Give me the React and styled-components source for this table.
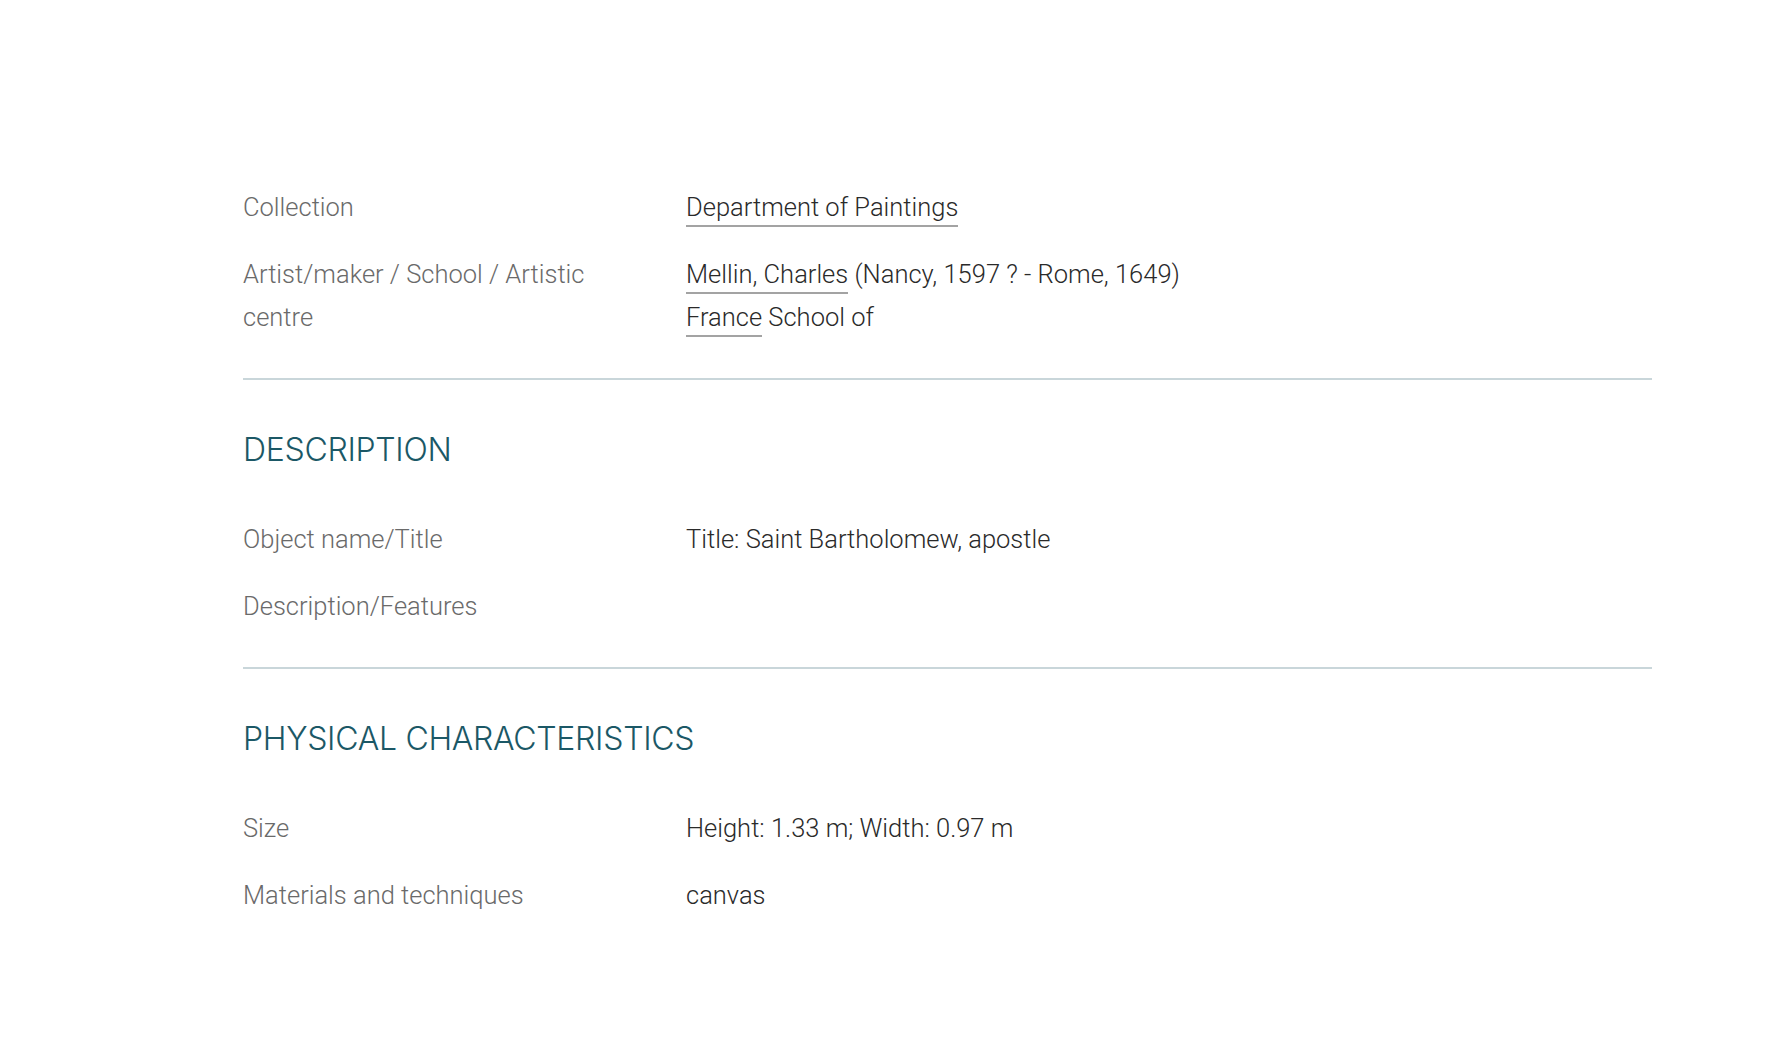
import React from "react";
import styled, { createGlobalStyle } from "styled-components";

const Global = createGlobalStyle`
  html, body { margin: 0; padding: 0; background: #fff; }
  body { font-family: Roboto, "Liberation Sans", sans-serif; }
`;

const Page = styled.main`
  padding: 186px 126px 120px 243px;
`;

const Section = styled.section`
  display: flex;
  flex-direction: column;
`;

const Heading = styled.h2`
  margin: 51px 0 49px;
  font-family: Inter, "Open Sans", sans-serif;
  font-weight: 350;
  font-size: 32px;
  line-height: 38px;
  letter-spacing: -0.3px;
  color: #1b5866;
  text-transform: uppercase;
`;

const Rows = styled.dl`
  margin: 0;
  display: flex;
  flex-direction: column;
  gap: 24px;
`;

const Row = styled.div`
  display: grid;
  grid-template-columns: 443px 1fr;
`;

const Label = styled.dt`
  padding-right: 40px;
  font-weight: 300;
  font-size: 25.5px;
  line-height: 43px;
  color: #6a6a6a;
`;

const Value = styled.dd`
  margin: 0;
  font-weight: 300;
  font-size: 25.5px;
  line-height: 43px;
  color: #2a2a2a;
  min-height: 43px;
`;

const Line = styled.div``;

const Link = styled.a`
  color: #2a2a2a;
  text-decoration: none;
  border-bottom: 2px solid #a3a3a3;
  padding-bottom: 3px;
`;

const Divider = styled.hr`
  margin: 39px 0 0;
  border: 0;
  border-top: 2px solid #c9d6da;
  height: 0;
`;

const data = [
  {
    rows: [
      { label: "Collection", value: [[<Link href="#" key="l">Department of Paintings</Link>]] },
      {
        label: "Artist/maker / School / Artistic centre",
        value: [
          [<Link href="#" key="a">Mellin, Charles</Link>, " (Nancy, 1597 ? - Rome, 1649)"],
          [<Link href="#" key="b">France</Link>, " School of"],
        ],
      },
    ],
    divider: true,
  },
  {
    title: "Description",
    rows: [
      { label: "Object name/Title", value: [["Title: Saint Bartholomew, apostle"]] },
      { label: "Description/Features", value: [[""]] },
    ],
    divider: true,
  },
  {
    title: "Physical characteristics",
    rows: [
      { label: "Size", value: [["Height: 1.33 m; Width: 0.97 m"]] },
      { label: "Materials and techniques", value: [["canvas"]] },
    ],
  },
];

export default function App() {
  return (
    <>
      <Global />
      <Page>
        {data.map((s, i) => (
          <Section key={i}>
            {s.title && <Heading>{s.title}</Heading>}
            <Rows>
              {s.rows.map((r, j) => (
                <Row key={j}>
                  <Label>{r.label}</Label>
                  <Value>
                    {r.value.map((l, k) => (
                      <Line key={k}>{l}</Line>
                    ))}
                  </Value>
                </Row>
              ))}
            </Rows>
            {s.divider && <Divider />}
          </Section>
        ))}
      </Page>
    </>
  );
}
